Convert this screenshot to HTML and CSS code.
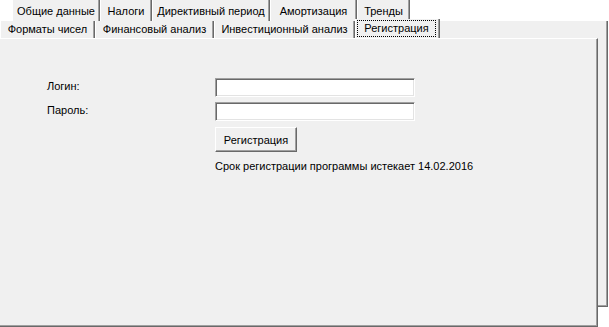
FILE: index.html
```html
<!DOCTYPE html>
<html>
<head>
    <title>Настройки</title>
    <link rel="stylesheet" href="styles.css">
</head>
<body>
    <div class="tabs tabs-top">
        <div class="tab w-obshie">Общие данные</div>
        <div class="tab w-nalogi">Налоги</div>
        <div class="tab w-direkt">Директивный период</div>
        <div class="tab w-amort">Амортизация</div>
        <div class="tab w-trendy">Тренды</div>
    </div>
    <div class="back">
        <div class="tabs tabs-front">
            <div class="tab w-format">Форматы чисел</div>
            <div class="tab w-fin">Финансовый анализ</div>
            <div class="tab w-invest">Инвестиционный анализ</div>
            <div class="tab tab-active w-reg"><span class="focus">Регистрация</span></div>
        </div>
        <div class="page">
            <div class="form">
                <label for="login">Логин:</label>
                <input type="text" id="login">
                <label for="password">Пароль:</label>
                <input type="password" id="password">
                <span></span>
                <button id="register">Регистрация</button>
                <span></span>
                <div class="expire">Срок регистрации программы истекает 14.02.2016</div>
            </div>
        </div>
    </div>
</body>
</html>
```

FILE: styles.css
```css
* {
    margin: 0px;
    padding: 0px;
    box-sizing: border-box;
}
html, body {
    height: 327px;
}
body {
    font-family: "Liberation Sans", Arial, sans-serif;
    font-size: 11px;
    color: #000;
    background: #fff;
    width: 609px;
}
.tabs {
    display: flex;
}
.tabs-top {
    height: 21px;
    padding-left: 12px;
}
.tab {
    height: 100%;
    background: #f0f0f0;
    border-left: 1px solid #fff;
    border-right: 1px solid #696969;
    box-shadow: inset -1px 0 0 #a0a0a0;
    text-align: center;
    line-height: 16px;
    padding-top: 3px;
    white-space: nowrap;
}
.tabs-front {
    height: 17px;
}
.tabs-front .tab {
    padding-top: 1px;
    line-height: 15px;
}
.tab-active {
    height: 19px;
    margin-top: -2px;
    position: relative;
    padding: 1px 3px 0 1px;
}
.tabs-front .tab-active {
    padding-top: 1px;
}
.tab-active .focus {
    display: block;
    height: 17px;
    border: 1px dotted #000;
    line-height: 15px;
}
.w-obshie { width: 88px; }
.w-nalogi { width: 52px; }
.w-direkt { width: 118px; }
.w-amort { width: 87px; }
.w-trendy { width: 53px; }
.w-format { width: 95px; }
.w-fin { width: 119px; }
.w-invest { width: 141px; }
.w-reg { width: 85px; }
.back {
    width: 608px;
    height: 286px;
    background: #f0f0f0;
    border-right: 1px solid #696969;
    border-bottom: 1px solid #696969;
    box-shadow: inset -1px -1px 0 #a0a0a0;
}
.page {
    width: 598px;
    height: 289px;
    background: #f0f0f0;
    border-top: 1px solid #fff;
    border-right: 1px solid #696969;
    border-bottom: 1px solid #696969;
    box-shadow: inset -1px -1px 0 #a0a0a0;
    padding: 39px 0 0 47px;
    position: relative;
}
.form {
    display: grid;
    grid-template-columns: 168px 200px;
    row-gap: 5px;
    align-items: center;
}
.form label {
    position: relative;
    top: -2px;
}
.form input {
    width: 200px;
    height: 19px;
    background: #fff;
    border-top: 1px solid #a0a0a0;
    border-left: 1px solid #a0a0a0;
    border-right: 1px solid #fff;
    border-bottom: 1px solid #fff;
    box-shadow: inset 1px 1px 0 #696969, inset -1px -1px 0 #e3e3e3;
    outline: none;
}
.form button {
    justify-self: start;
    width: 82px;
    height: 25px;
    margin-top: 1px;
    background: #f0f0f0;
    font-family: inherit;
    font-size: 11px;
    color: #000;
    border-top: 1px solid #fff;
    border-left: 1px solid #fff;
    border-right: 1px solid #696969;
    border-bottom: 1px solid #696969;
    box-shadow: inset -1px -1px 0 #a0a0a0;
}
.form .expire {
    margin-top: 3px;
    white-space: nowrap;
}
```
